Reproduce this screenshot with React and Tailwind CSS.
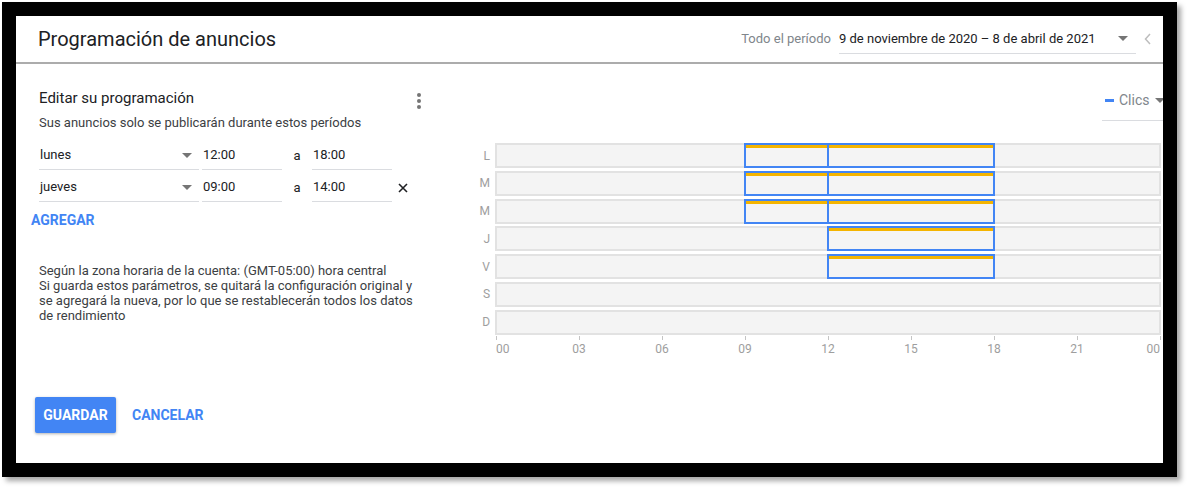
import React from "react";

const HOUR_PX = 664 / 24;
const px = (h) => Math.round(h * HOUR_PX);

const rows = [
  { d: "L", seg: [[9, 12], [12, 18]] },
  { d: "M", seg: [[9, 12], [12, 18]] },
  { d: "M", seg: [[9, 12], [12, 18]] },
  { d: "J", seg: [[12, 18]] },
  { d: "V", seg: [[12, 18]] },
  { d: "S", seg: [] },
  { d: "D", seg: [] },
];

const ticks = [0, 3, 6, 9, 12, 15, 18, 21, 24];

function Caret({ className = "" }) {
  return (
    <svg width="10" height="5" viewBox="0 0 10 5" className={className}>
      <path d="M0 0 L10 0 L5 5 Z" fill="#757575" />
    </svg>
  );
}

function Field({ w, text, caret }) {
  return (
    <div
      className={`${w} h-[29px] border-b border-[#dadce0] flex items-center text-[13px] text-[#202124]`}
    >
      <span className="pl-[1px]">{text}</span>
      {caret && <Caret className="ml-auto mr-[7px]" />}
    </div>
  );
}

function ScheduleRow({ day, from, to, removable }) {
  return (
    <div className="flex items-center">
      <Field w="w-[160px]" text={day} caret />
      <div className="w-[3px]" />
      <Field w="w-[80px]" text={from} />
      <div className="w-[30px] text-center text-[13px] text-[#202124]">a</div>
      <Field w="w-[80px]" text={to} />
      <div className="w-[22px] flex justify-center">
        {removable && (
          <svg width="10" height="10" viewBox="0 0 10 10">
            <path d="M1 1 L9 9 M9 1 L1 9" stroke="#202124" strokeWidth="1.6" />
          </svg>
        )}
      </div>
    </div>
  );
}

export default function App() {
  return (
    <div className="w-[1187px] h-[487px] bg-white pt-[2px] pl-[2px] font-[Roboto,sans-serif]">
      <div className="w-[1175px] h-[475px] border-[14px] border-black bg-white shadow-[4px_4px_5px_rgba(0,0,0,0.35)] flex flex-col overflow-hidden">
        {/* Header */}
        <header className="h-[46px] shrink-0 flex items-center pl-[22px] pr-[12px]">
          <h1 className="text-[20px] text-[#202124] leading-[24px]">Programación de anuncios</h1>
          <div className="ml-auto flex items-center">
            <span className="text-[13px] text-[#80868b]">Todo el período</span>
            <div className="ml-[8px] w-[297px] h-[30px] border-b border-[#dadce0] flex items-center text-[13px] text-[#202124]">
              <span>9 de noviembre de 2020 – 8 de abril de 2021</span>
              <Caret className="ml-auto mr-[8px]" />
            </div>
            <svg width="7" height="12" viewBox="0 0 7 12" className="ml-[8px]">
              <path d="M6 1 L1.5 6 L6 11" stroke="#bdbdbd" strokeWidth="1.5" fill="none" />
            </svg>
          </div>
        </header>
        <div className="h-[2px] shrink-0 bg-[#acacac]" />

        {/* Body */}
        <div className="flex flex-1 min-h-0">
          {/* Left column */}
          <div className="w-[454px] shrink-0 pl-[15px] flex flex-col">
            <div className="mt-[24px] pl-[8px] w-[398px] h-[20px] flex items-start">
              <h2 className="text-[15px] leading-[20px] text-[#202124]">Editar su programación</h2>
              <div className="ml-auto w-[20px] flex flex-col items-center gap-[2.5px] mt-[5px]">
                <span className="w-[3.5px] h-[3.5px] rounded-full bg-[#757575]" />
                <span className="w-[3.5px] h-[3.5px] rounded-full bg-[#757575]" />
                <span className="w-[3.5px] h-[3.5px] rounded-full bg-[#757575]" />
              </div>
            </div>
            <p className="pl-[8px] mt-[7px] text-[13px] leading-[16px] text-[#3c4043]">
              Sus anuncios solo se publicarán durante estos períodos
            </p>
            <div className="pl-[8px] mt-[10px] flex flex-col gap-[3px]">
              <ScheduleRow day="lunes" from="12:00" to="18:00" />
              <ScheduleRow day="jueves" from="09:00" to="14:00" removable />
            </div>
            <button className="self-start mt-[8px] text-[14px] leading-[20px] font-bold text-[#4285f4]">
              AGREGAR
            </button>
            <p className="pl-[8px] mt-[33px] text-[13px] leading-[15px] text-[#3c4043] whitespace-nowrap">
              Según la zona horaria de la cuenta: (GMT-05:00) hora central
              <br />
              Si guarda estos parámetros, se quitará la configuración original y
              <br />
              se agregará la nueva, por lo que se restablecerán todos los datos
              <br />
              de rendimiento
            </p>
            <div className="mt-[74px] ml-[4px] flex items-center">
              <button className="w-[81px] h-[36px] rounded-[2px] bg-[#4285f4] text-white text-[14px] font-bold shadow-[0_1px_3px_rgba(0,0,0,0.3)]">
                GUARDAR
              </button>
              <button className="ml-[16px] text-[14px] font-bold text-[#4285f4]">CANCELAR</button>
            </div>
          </div>

          {/* Right column: chart */}
          <div className="flex-1 flex flex-col">
            <div className="flex justify-end mr-[-12px]">
              <div className="mt-[24px] w-[73px] h-[33px] border-b border-[#dadce0] flex items-start">
                <div className="h-[24px] flex items-center">
                  <span className="ml-[3px] w-[9px] h-[3px] bg-[#4285f4]" />
                  <span className="ml-[5px] text-[14px] text-[#80868b]">Clics</span>
                  <Caret className="ml-[6px]" />
                </div>
              </div>
            </div>

            <div className="mt-[22px] flex">
              <div className="w-[20px] flex flex-col gap-[2.75px]">
                {rows.map((r, i) => (
                  <div key={i} className="h-[25px] flex items-center justify-end text-[12px] text-[#9e9e9e]">
                    {r.d}
                  </div>
                ))}
              </div>
              <div className="ml-[5px] w-[666px] flex flex-col">
                <div className="flex flex-col gap-[2.75px]">
                  {rows.map((r, i) => (
                    <div key={i} className="relative h-[25px]">
                      <div className="h-full border-2 border-[#e2e2e2] bg-[#f4f4f4]" />
                      {r.seg.map(([s, e], j) => (
                        <div
                          key={j}
                          className="absolute top-0 bottom-0 border-2 border-[#4285f4]"
                          style={{ left: px(s), width: px(e) + 2 - px(s) }}
                        >
                          <div className="h-[3px] bg-[#f4b400]" />
                        </div>
                      ))}
                    </div>
                  ))}
                </div>
                <div className="relative h-[24px]">
                  {ticks.map((t, i) => {
                    const x = 1 + px(t);
                    const align =
                      i === 0
                        ? "translate-x-0"
                        : i === ticks.length - 1
                        ? "-translate-x-full"
                        : "-translate-x-1/2";
                    return (
                      <React.Fragment key={i}>
                        <div className="absolute top-[1px] w-[1px] h-[4px] bg-[#c4c4c4]" style={{ left: x }} />
                        <div
                          className={`absolute top-[6px] text-[12px] leading-[16px] text-[#9e9e9e] ${align}`}
                          style={{ left: x }}
                        >
                          {String(t % 24).padStart(2, "0")}
                        </div>
                      </React.Fragment>
                    );
                  })}
                </div>
              </div>
            </div>
          </div>
        </div>
      </div>
    </div>
  );
}
